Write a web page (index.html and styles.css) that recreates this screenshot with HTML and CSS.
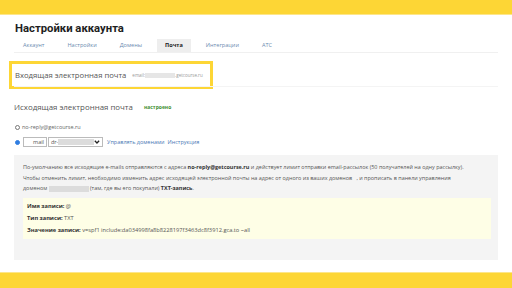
FILE: index.html
```html
<!DOCTYPE html>
<html lang="ru">
<head>
    <meta charset="UTF-8">
    <meta name="viewport" content="width=device-width, initial-scale=1.0">
    <title>Настройки аккаунта</title>
    <link rel="stylesheet" href="styles.css">
</head>
<body>

<div class="top-bar"></div>

<main class="page">
    <h1 class="page-title">Настройки аккаунта</h1>

    <nav class="tabs">
        <a class="tab">Аккаунт</a>
        <a class="tab">Настройки</a>
        <a class="tab">Домены</a>
        <a class="tab active">Почта</a>
        <a class="tab">Интеграции</a>
        <a class="tab">АТС</a>
    </nav>

    <section class="incoming">
        <h2 class="section-title">Входящая электронная почта</h2>
        <span class="incoming-address">email:<span class="blur blur-email"></span>.getcourse.ru</span>
    </section>

    <section class="outgoing">
        <h2 class="section-title">Исходящая электронная почта <span class="status">настроено</span></h2>

        <label class="radio-row">
            <input type="radio" name="sender" class="radio">
            <span>no-reply@getcourse.ru</span>
        </label>

        <div class="radio-row">
            <input type="radio" name="sender" class="radio" checked>
            <span class="field-mail">mail</span>
            <span class="field-select">
                <span>dr-</span><span class="blur blur-domain"></span>
                <svg class="chevron" width="6" height="4" viewBox="0 0 6 4"><path d="M0.8 0.8 L3 3 L5.2 0.8" fill="none" stroke="#222" stroke-width="1.3"/></svg>
            </span>
            <a class="link">Управлять доменами</a>
            <a class="link">Инструкция</a>
        </div>

        <div class="info">
            <p>По-умолчанию все исходящие e-mails отправляются с адреса <b>no-reply@getcourse.ru</b> и действует лимит отправки email-рассылок (50 получателей на одну рассылку).</p>
            <p>Чтобы отменить лимит, необходимо изменить адрес исходящей электронной почты на адрес от одного из ваших доменов &nbsp; , и прописать в панели управления<br>доменом <span class="blur blur-inline"></span> (там, где вы его покупали) <b>TXT-запись</b>.</p>

            <div class="record">
                <p><b>Имя записи:</b> @</p>
                <p><b>Тип записи:</b> TXT</p>
                <p><b>Значение записи:</b> v=spf1 include:da034998fa8b8228197f3463dc8f3912.gca.to ~all</p>
            </div>
        </div>
    </section>
</main>

<div class="bottom-bar"></div>

</body>
</html>
```

FILE: styles.css
```css
body {
    margin: 0;
    height: 288px;
    display: flex;
    flex-direction: column;
    background: #fff;
    font-family: "Open Sans", "DejaVu Sans", sans-serif;
    color: #444;
    overflow: hidden;
}

.top-bar {
    height: 15px;
    background: #fdd635;
    border-bottom: 1px solid #fde68a;
    box-sizing: border-box;
}

.bottom-bar {
    height: 16px;
    background: #fdd635;
    border-top: 1px solid #fde68a;
    box-sizing: border-box;
}

.page {
    flex: 1;
    padding: 0 14px 0 14px;
}

.page-title {
    margin: 4px 0 0 1px;
    font-family: Roboto, "Open Sans", sans-serif;
    font-weight: 700;
    font-size: 11.3px;
    line-height: 19px;
    color: #1e1e1e;
    white-space: nowrap;
}

/* tabs */
.tabs {
    display: flex;
    gap: 7px;
    margin-top: 1px;
    padding-left: 1px;
    border-bottom: 1px solid #f0f0f0;
}

.tab {
    padding: 0 8px;
    height: 13px;
    line-height: 13px;
    font-size: 5.6px;
    color: #6a8ab0;
}

.tab.active {
    background: #eeeeee;
    color: #222;
    font-weight: 700;
}

/* incoming */
.incoming {
    display: flex;
    align-items: center;
    gap: 6px;
    width: 195px;
    height: 22px;
    margin: 8px 0 0 -5px;
    padding: 0 0 0 3px;
    border: 3px solid #fdd635;
}

.section-title {
    margin: 0;
    font-weight: 400;
    font-size: 7.7px;
    color: #555;
    white-space: nowrap;
}

.incoming-address {
    display: flex;
    align-items: center;
    font-size: 4.5px;
    color: #999;
}

.blur {
    display: inline-block;
    background: #dcdcdc;
    vertical-align: middle;
}

.blur-email {
    width: 30px;
    height: 5px;
    background: #e6e6e6;
}

/* outgoing */
.outgoing {
    border-top: 1px solid #f4f4f4;
    margin-top: -3px;
    padding-top: 15px;
}

.outgoing .section-title {
    font-size: 7.9px;
    display: flex;
    align-items: center;
    gap: 11px;
}

.status {
    font-size: 5px;
    font-weight: 700;
    color: #3f8f2f;
}

.radio-row {
    display: flex;
    align-items: center;
    font-size: 5.5px;
    color: #666;
    margin-left: 1px;
    margin-top: 11px;
}

.radio-row + .radio-row {
    margin-top: 6px;
}

.radio {
    appearance: none;
    width: 5px;
    height: 5px;
    margin: 0 2px 0 0;
    border: 0.7px solid #777;
    border-radius: 50%;
}

.radio:checked {
    border-color: #2f7de1;
    background: #2f7de1;
}

.field-mail {
    width: 20px;
    height: 8px;
    line-height: 8px;
    padding-right: 2px;
    text-align: right;
    border: 1px solid #bbb;
    margin-left: 1px;
    color: #555;
}

.field-select {
    display: flex;
    align-items: center;
    width: 49px;
    height: 8px;
    padding: 0 2px;
    margin-left: 1px;
    border: 1px solid #bbb;
    color: #555;
}

.blur-domain {
    width: 36px;
    height: 6px;
}

.chevron {
    margin-left: auto;
}

.link {
    color: #4a78b5;
    margin-left: 4px;
}

.link + .link {
    margin-left: 3px;
}

/* info panel */
.info {
    margin-top: 8px;
    background: #f4f4f4;
    padding: 7px 7px 21px 9px;
    font-size: 5.45px;
    color: #555;
}

.info p {
    margin: 0 0 1px 0;
    line-height: 10px;
}

.info b {
    color: #333;
}

.blur-inline {
    width: 40px;
    height: 6px;
}

.record {
    margin-top: 5px;
    background: #fefee6;
    padding: 2px 4px 3px;
}

.record p {
    line-height: 12px;
    margin: 0;
    font-size: 5.7px;
}
```
